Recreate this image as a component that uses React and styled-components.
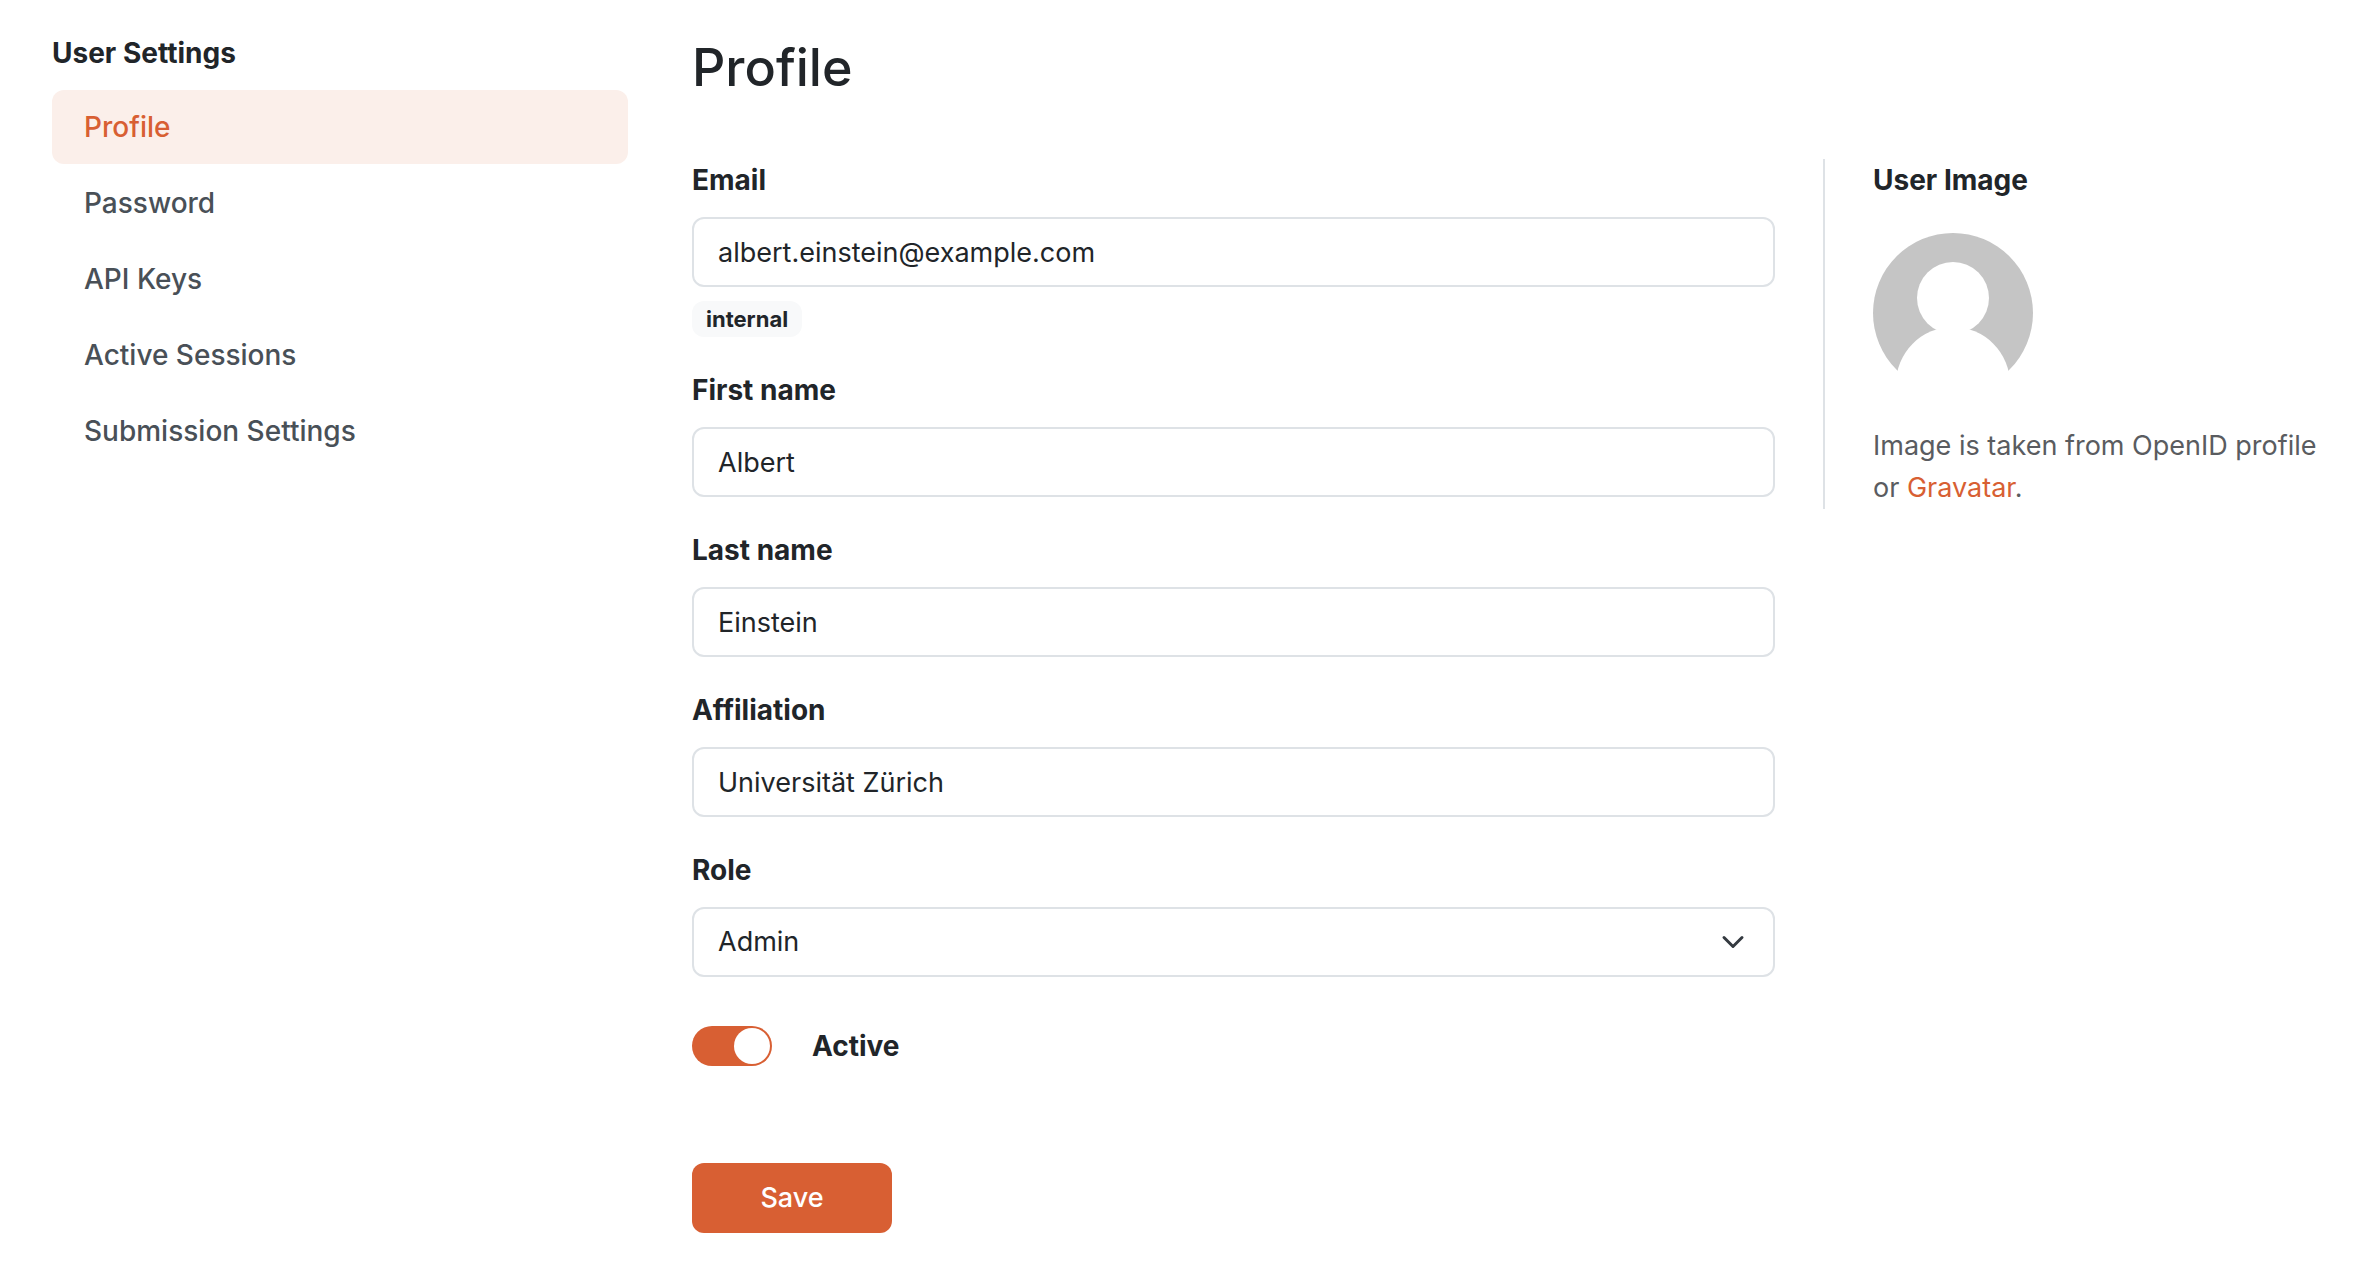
import { useState } from "react";
import styled, { createGlobalStyle } from "styled-components";

const GlobalStyle = createGlobalStyle`
  *, *::before, *::after {
    box-sizing: border-box;
  }

  body {
    margin: 0;
    background: #ffffff;
    color: #212529;
    font-family: Inter, "Liberation Sans", sans-serif;
    font-size: 27px;
    line-height: 42px;
  }
`;

const Page = styled.div`
  display: grid;
  grid-template-columns: 576px minmax(0, 1fr);
  gap: 64px;
  padding: 32px 52px;
`;

const SectionTitle = styled.h2`
  margin: 0;
  font-size: 28px;
  font-weight: 700;
  line-height: 42px;
`;

const NavList = styled.nav`
  display: flex;
  flex-direction: column;
  gap: 2px;
  margin-top: 16px;
`;

const NavLink = styled.a`
  padding: 16px 32px;
  border-radius: 12px;
  font-size: 28px;
  font-weight: 500;
  text-decoration: none;
  color: ${({ $active }) => ($active ? "#d85f33" : "#495057")};
  background: ${({ $active }) => ($active ? "#fbefea" : "transparent")};
`;

const PageTitle = styled.h1`
  margin: 0 0 56px;
  font-size: 52px;
  font-weight: 500;
  line-height: 71px;
`;

const Columns = styled.div`
  display: grid;
  grid-template-columns: minmax(0, 1fr) 497px;
  align-items: start;
  gap: 48px;
`;

const Form = styled.form`
  display: flex;
  flex-direction: column;
  gap: 32px;
`;

const Group = styled.div`
  display: flex;
  flex-direction: column;
  align-items: flex-start;
`;

const Label = styled.label`
  margin-bottom: 16px;
  font-size: 28px;
  font-weight: 700;
`;

const Input = styled.input`
  width: 100%;
  height: 70px;
  padding: 0 24px;
  border: 2px solid #dee2e6;
  border-radius: 12px;
  background: #ffffff;
  color: inherit;
  font: inherit;

  &:focus {
    outline: none;
    border-color: #d85f33;
  }
`;

const SelectWrap = styled.div`
  display: grid;
  width: 100%;
  align-items: center;

  & > * {
    grid-area: 1 / 1;
  }

  & svg {
    justify-self: end;
    margin-right: 30px;
    pointer-events: none;
  }
`;

const Select = styled(Input)`
  appearance: none;
`;

const Badge = styled.span`
  margin-top: 14px;
  padding: 7px 14px;
  border-radius: 12px;
  background: #f8f9fa;
  font-size: 22px;
  font-weight: 700;
  line-height: 22px;
`;

const SwitchRow = styled.div`
  display: flex;
  align-items: center;
  gap: 40px;
  margin-top: 16px;

  & label {
    font-size: 28px;
    font-weight: 700;
  }
`;

const Switch = styled.input`
  appearance: none;
  display: flex;
  justify-content: ${({ checked }) => (checked ? "flex-end" : "flex-start")};
  width: 80px;
  height: 40px;
  margin: 0;
  padding: 2px;
  border-radius: 20px;
  background: ${({ checked }) => (checked ? "#d85f33" : "#dee2e6")};
  cursor: pointer;

  &::before {
    content: "";
    width: 36px;
    height: 36px;
    border-radius: 50%;
    background: #ffffff;
  }
`;

const SaveButton = styled.button`
  align-self: flex-start;
  width: 200px;
  height: 70px;
  margin-top: 64px;
  border: none;
  border-radius: 12px;
  background: #d85f33;
  color: #ffffff;
  font: inherit;
  font-weight: 500;
  cursor: pointer;

  &:hover {
    background: #c2552e;
  }
`;

const ImagePanel = styled.aside`
  padding-left: 48px;
  border-left: 2px solid #dee2e6;

  & svg {
    display: block;
    margin: 32px 0;
  }

  & p {
    margin: 0;
    color: #5a5c60;
  }

  & a {
    color: #d85f33;
    text-decoration: none;
  }
`;

const navItems = [
  "Profile",
  "Password",
  "API Keys",
  "Active Sessions",
  "Submission Settings",
];

function Avatar() {
  return (
    <svg width="160" height="160" viewBox="0 0 160 160" role="img" aria-label="User">
      <clipPath id="avatar-clip">
        <circle cx="80" cy="80" r="80" />
      </clipPath>
      <g clipPath="url(#avatar-clip)">
        <path d="M0 0H160V138H0Z" fill="#c5c5c5" />
        <circle cx="80" cy="65" r="36" fill="#fff" />
        <circle cx="80" cy="151" r="57" fill="#fff" />
      </g>
    </svg>
  );
}

function Chevron() {
  return (
    <svg width="24" height="24" viewBox="0 0 16 16" fill="none" aria-hidden="true">
      <path
        d="m2 5 6 6 6-6"
        stroke="#343a40"
        strokeWidth="2"
        strokeLinecap="round"
        strokeLinejoin="round"
      />
    </svg>
  );
}

export default function App() {
  const [profile, setProfile] = useState({
    email: "albert.einstein@example.com",
    firstName: "Albert",
    lastName: "Einstein",
    affiliation: "Universität Zürich",
    role: "Admin",
    active: true,
  });

  function handleChange(identifier, value) {
    setProfile((prev) => ({ ...prev, [identifier]: value }));
  }

  function renderField(identifier, label, type = "text") {
    return (
      <>
        <Label htmlFor={identifier}>{label}</Label>
        <Input
          id={identifier}
          type={type}
          value={profile[identifier]}
          onChange={(event) => handleChange(identifier, event.target.value)}
        />
      </>
    );
  }

  return (
    <>
      <GlobalStyle />
      <Page>
        <div>
          <SectionTitle>User Settings</SectionTitle>
          <NavList>
            {navItems.map((item) => (
              <NavLink key={item} href="#" $active={item === "Profile"}>
                {item}
              </NavLink>
            ))}
          </NavList>
        </div>
        <main>
          <PageTitle>Profile</PageTitle>
          <Columns>
            <Form onSubmit={(event) => event.preventDefault()}>
              <Group>
                {renderField("email", "Email", "email")}
                <Badge>internal</Badge>
              </Group>
              <Group>{renderField("firstName", "First name")}</Group>
              <Group>{renderField("lastName", "Last name")}</Group>
              <Group>{renderField("affiliation", "Affiliation")}</Group>
              <Group>
                <Label htmlFor="role">Role</Label>
                <SelectWrap>
                  <Select
                    as="select"
                    id="role"
                    value={profile.role}
                    onChange={(event) => handleChange("role", event.target.value)}
                  >
                    <option>Admin</option>
                    <option>Researcher</option>
                  </Select>
                  <Chevron />
                </SelectWrap>
              </Group>
              <SwitchRow>
                <Switch
                  id="active"
                  type="checkbox"
                  checked={profile.active}
                  onChange={(event) => handleChange("active", event.target.checked)}
                />
                <label htmlFor="active">Active</label>
              </SwitchRow>
              <SaveButton type="submit">Save</SaveButton>
            </Form>
            <ImagePanel>
              <SectionTitle>User Image</SectionTitle>
              <Avatar />
              <p>
                Image is taken from OpenID profile or <a href="#">Gravatar</a>.
              </p>
            </ImagePanel>
          </Columns>
        </main>
      </Page>
    </>
  );
}
